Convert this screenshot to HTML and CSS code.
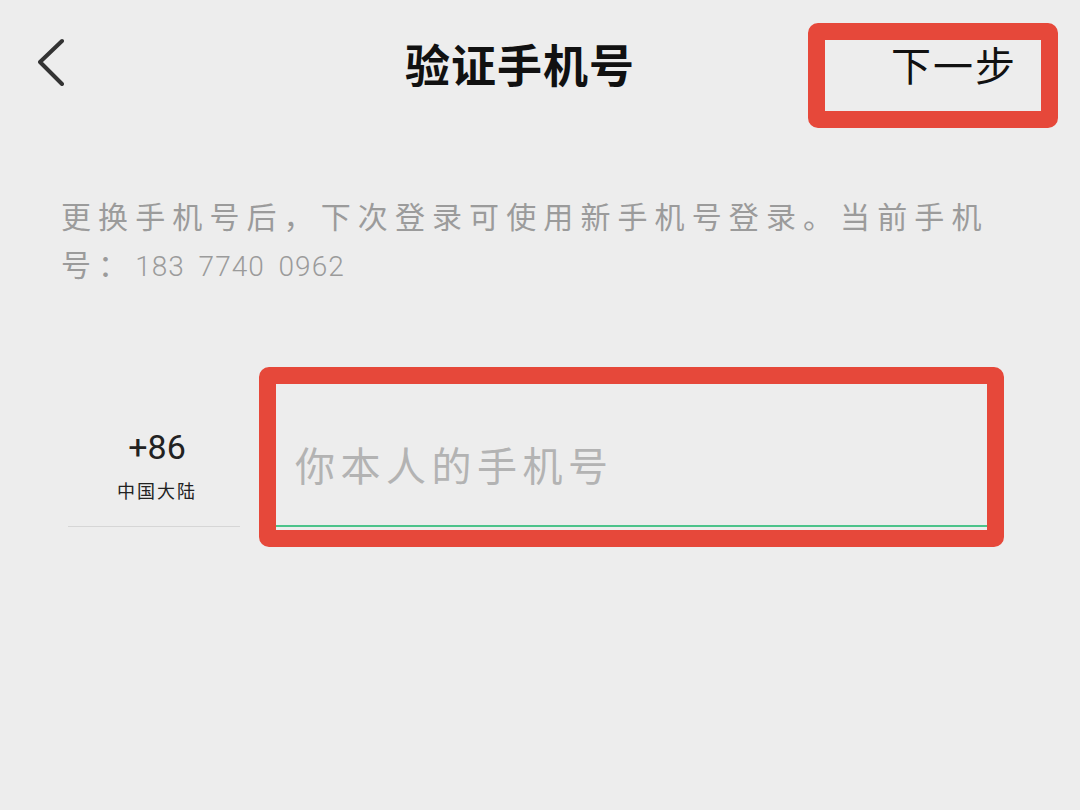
FILE: index.html
```html
<!DOCTYPE html>
<html lang="zh-CN">
<head>
  <meta charset="UTF-8" />
  <meta name="viewport" content="width=device-width, initial-scale=1.0" />
  <title>验证手机号</title>
  <link rel="stylesheet" href="styles.css">
</head>
<body>

  <header class="topbar">
    <button class="back" aria-label="返回">
      <svg width="26" height="48" viewBox="0 0 26 48">
        <path d="M24 3 L2 24 L24 46" fill="none" stroke="#333" stroke-width="4" stroke-linecap="round" stroke-linejoin="round"/>
      </svg>
    </button>
    <h1 class="title">验证手机号</h1>
    <div class="next-box">
      <span class="next">下一步</span>
    </div>
  </header>

  <p class="desc"><span class="desc-text">更换手机号后，下次登录可使用新手机号登录。当前手机号：</span><span class="num">183 7740 0962</span></p>

  <section class="phone-row">
    <div class="country">
      <span class="code">+86</span>
      <span class="region">中国大陆</span>
    </div>
    <div class="field-box">
      <input class="phone-input" type="tel" placeholder="你本人的手机号">
    </div>
  </section>

</body>
</html>
```

FILE: styles.css
```css
/* Base */
* {
  box-sizing: border-box;
  margin: 0;
  padding: 0;
}

body {
  font-family: "Noto Sans CJK SC", "Noto Sans", sans-serif;
  background: #ededed;
  color: #111;
  width: 1080px;
  height: 810px;
  overflow: hidden;
}

/* Top bar */
.topbar {
  display: flex;
  align-items: flex-start;
  height: 128px;
  padding: 23px 22px 0 38px;
}

.back {
  display: block;
  width: 26px;
  height: 48px;
  margin-top: 15px;
  border: none;
  background: none;
  cursor: pointer;
}

.back svg {
  display: block;
}

.title {
  margin-left: 341px;
  margin-top: 18px;
  font-size: 45px;
  line-height: 45px;
  font-weight: 700;
  letter-spacing: 1px;
  color: #111;
}

.next-box {
  margin-left: auto;
  width: 250px;
  height: 105px;
  border: 17px solid #e6483a;
  border-radius: 10px;
  padding: 4px 24px 0 0;
  text-align: right;
}

.next {
  font-size: 40px;
  line-height: 40px;
  letter-spacing: 2px;
  color: #111;
}

/* Description */
.desc {
  margin-top: 63px;
  padding: 0 70px 0 61px;
  font-size: 30px;
  line-height: 48px;
  color: #9b9b9b;
}

.desc-text {
  letter-spacing: 7.1px;
}

.desc .num {
  font-family: Roboto, "Noto Sans", sans-serif;
  font-weight: 300;
  font-size: 28px;
  line-height: 28px;
  letter-spacing: 1px;
  word-spacing: 6px;
}

/* Phone input row */
.phone-row {
  display: flex;
  gap: 19px;
  margin-top: 80px;
  padding-left: 68px;
}

.country {
  display: flex;
  flex-direction: column;
  align-items: center;
  width: 172px;
  height: 160px;
  padding: 63px 0 0 6px;
  border-bottom: 1px solid #d6d6d6;
}

.code {
  font-family: Roboto, "Noto Sans", sans-serif;
  font-size: 34px;
  line-height: 34px;
  color: #222;
}

.region {
  margin-top: 17px;
  font-size: 18px;
  line-height: 18px;
  letter-spacing: 2px;
  color: #222;
}

.field-box {
  width: 745px;
  height: 180px;
  border: 17px solid #e6483a;
  border-radius: 10px;
}

.phone-input {
  display: block;
  width: 100%;
  height: 143px;
  padding: 18px 0 0 19px;
  border: none;
  border-bottom: 2px solid #4cc38a;
  background: transparent;
  outline: none;
  font-family: "Noto Sans CJK SC", sans-serif;
  font-size: 40px;
  letter-spacing: 5.5px;
  color: #222;
}

.phone-input::placeholder {
  color: #b3b3b3;
}
```
